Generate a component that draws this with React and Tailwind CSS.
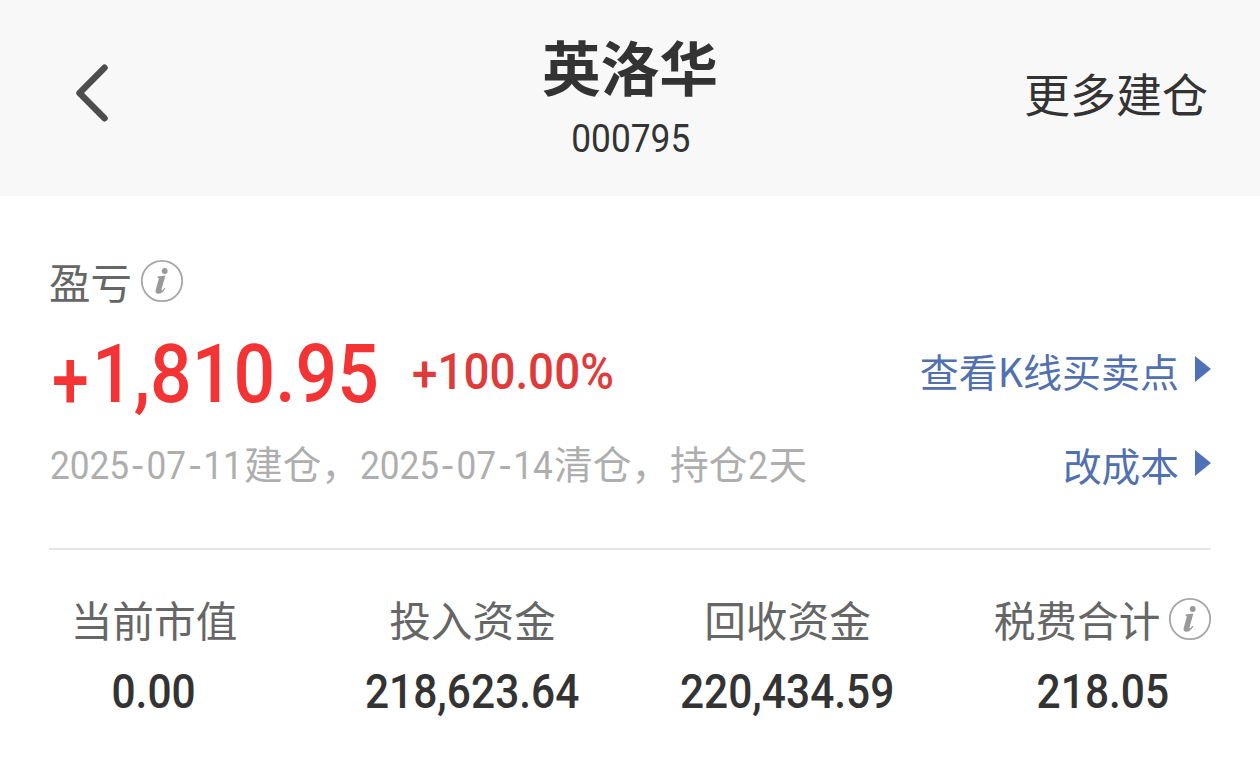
function InfoIcon() {
  return (
    <svg viewBox="0 0 44 44" className="h-11 w-11 shrink-0" fill="none">
      <circle cx="22" cy="22" r="20.2" stroke="#a6a6a6" strokeWidth="1.8" />
      <circle cx="24.7" cy="12" r="2.9" fill="#999999" />
      <path
        d="M17.600 17.600L25.400 16.500L21.600 30C21.200 31.700 21.800 31.800 22.900 30.700L24.500 28.800L25.400 29.400C23.200 32.800 20.900 34.800 18.300 34.800C15.900 34.800 15.100 33 15.800 30.600L18.700 20.300C19 19.200 18.700 18.800 17.600 18.700Z"
        fill="#999999"
      />
    </svg>
  );
}

function LinkArrow() {
  return (
    <svg viewBox="0 0 16 26" className="mb-0.5 h-[26px] w-4 shrink-0" fill="#5070b8">
      <path d="M0 0L16 13L0 26Z" />
    </svg>
  );
}

// Figures are set slightly narrower than the regular Roboto width
function Num({ children, className = "" }) {
  return (
    <span className={`inline-block whitespace-nowrap font-['Roboto',sans-serif] ${className}`}>
      {children}
    </span>
  );
}

function DateText({ value }) {
  const parts = value.split("-");
  return (
    <Num className="w-[194px] origin-left scale-x-[0.91]">
      {parts.map((part, i) => (
        <span key={i}>
          {i > 0 && (
            <span className="inline-block w-[19px] text-center">
              <span className="inline-block scale-x-[1.15]">-</span>
            </span>
          )}
          {part}
        </span>
      ))}
    </Num>
  );
}

const stats = [
  { label: "当前市值", value: "0.00", box: "pr-1.5" },
  { label: "投入资金", value: "218,623.64", box: "" },
  { label: "回收资金", value: "220,434.59", box: "" },
  { label: "税费合计", value: "218.05", info: true, box: "" },
];

export default function App() {
  return (
    <div className="h-[761px] w-[1260px] overflow-hidden bg-white font-['Noto_Sans_CJK_SC',sans-serif] text-[#333333]">
      {/* header */}
      <header className="grid h-[196px] grid-cols-[1fr_300px_1fr] bg-[#f8f8f8]">
        <button className="flex items-start pt-16 pl-[75px]" aria-label="返回">
          <svg viewBox="0 0 34 58" className="h-[58px] w-[34px]" fill="none">
            <path
              d="M29.500 3.700L4.500 29L29.500 54.300"
              stroke="#4d4d4d"
              strokeWidth="6.500"
              strokeLinecap="round"
              strokeLinejoin="round"
            />
          </svg>
        </button>

        <div className="flex flex-col items-center pt-[31px]">
          <h1 className="text-[58.7px] leading-[70px] font-bold">英洛华</h1>
          <Num className="mt-3 ml-px scale-x-[0.905] text-[39px] leading-[52px]">000795</Num>
        </div>

        <div className="flex items-start justify-end pt-[62px] pr-[52px]">
          <span className="text-[46px] leading-[60px]">更多建仓</span>
        </div>
      </header>

      <main className="px-[49px] pt-[62px]">
        {/* profit and loss */}
        <div className="flex h-[46px] items-center">
          <span className="text-[41.5px] leading-[46px] text-[#666666]">盈亏</span>
          <span className="ml-2">
            <InfoIcon />
          </span>
        </div>

        <div className="mt-6 flex h-[86px] items-center">
          <Num className="mt-1.5 w-[363px] origin-left scale-x-[0.895] text-[82px] leading-[86px] font-medium text-[#f43434]">
            <span className="relative top-1.5 inline-block w-[48px] text-center">
              <span className="inline-block scale-x-[0.9]">+</span>
            </span>
            1,810.95
          </Num>
          <Num className="mt-0.5 origin-left scale-x-[0.915] text-[50px] leading-[60px] font-medium text-[#e03b3b]">
            <span className="relative top-0.5">+</span>100.00%
          </Num>
          <a className="mb-0.5 ml-auto flex items-center gap-4 text-[39px] leading-[50px] text-[#5070b0]">
            查看K线买卖点
            <LinkArrow />
          </a>
        </div>

        <div className="mt-[25px] flex h-[50px] items-center text-[38.7px] leading-[50px]">
          <p className="ml-px whitespace-nowrap text-[#aeaeae]">
            <DateText value="2025-07-11" />
            建仓，
            <DateText value="2025-07-14" />
            清仓，持仓
            <Num className="w-[21px] origin-left scale-x-[0.91]">2</Num>天
          </p>
          <a className="ml-auto flex items-center gap-4 text-[#5070b0]">
            改成本
            <LinkArrow />
          </a>
        </div>

        {/* totals */}
        <div className="mt-[59px] grid grid-cols-[216px_215px_215px_216px] gap-x-[100px] border-t-2 border-[#e6e6ea] pt-11">
          {stats.map((item) => (
            <div key={item.label} className={`flex flex-col items-center ${item.box}`}>
              <div className="flex h-[50px] items-center whitespace-nowrap text-[41.7px] leading-[50px] text-[#666666]">
                {item.label}
                {item.info && (
                  <span className="ml-2 pb-px">
                    <InfoIcon />
                  </span>
                )}
              </div>
              <Num className="mt-[18px] scale-x-[0.885] text-[48px] leading-[60px] font-medium">
                {item.value}
              </Num>
            </div>
          ))}
        </div>
      </main>
    </div>
  );
}
